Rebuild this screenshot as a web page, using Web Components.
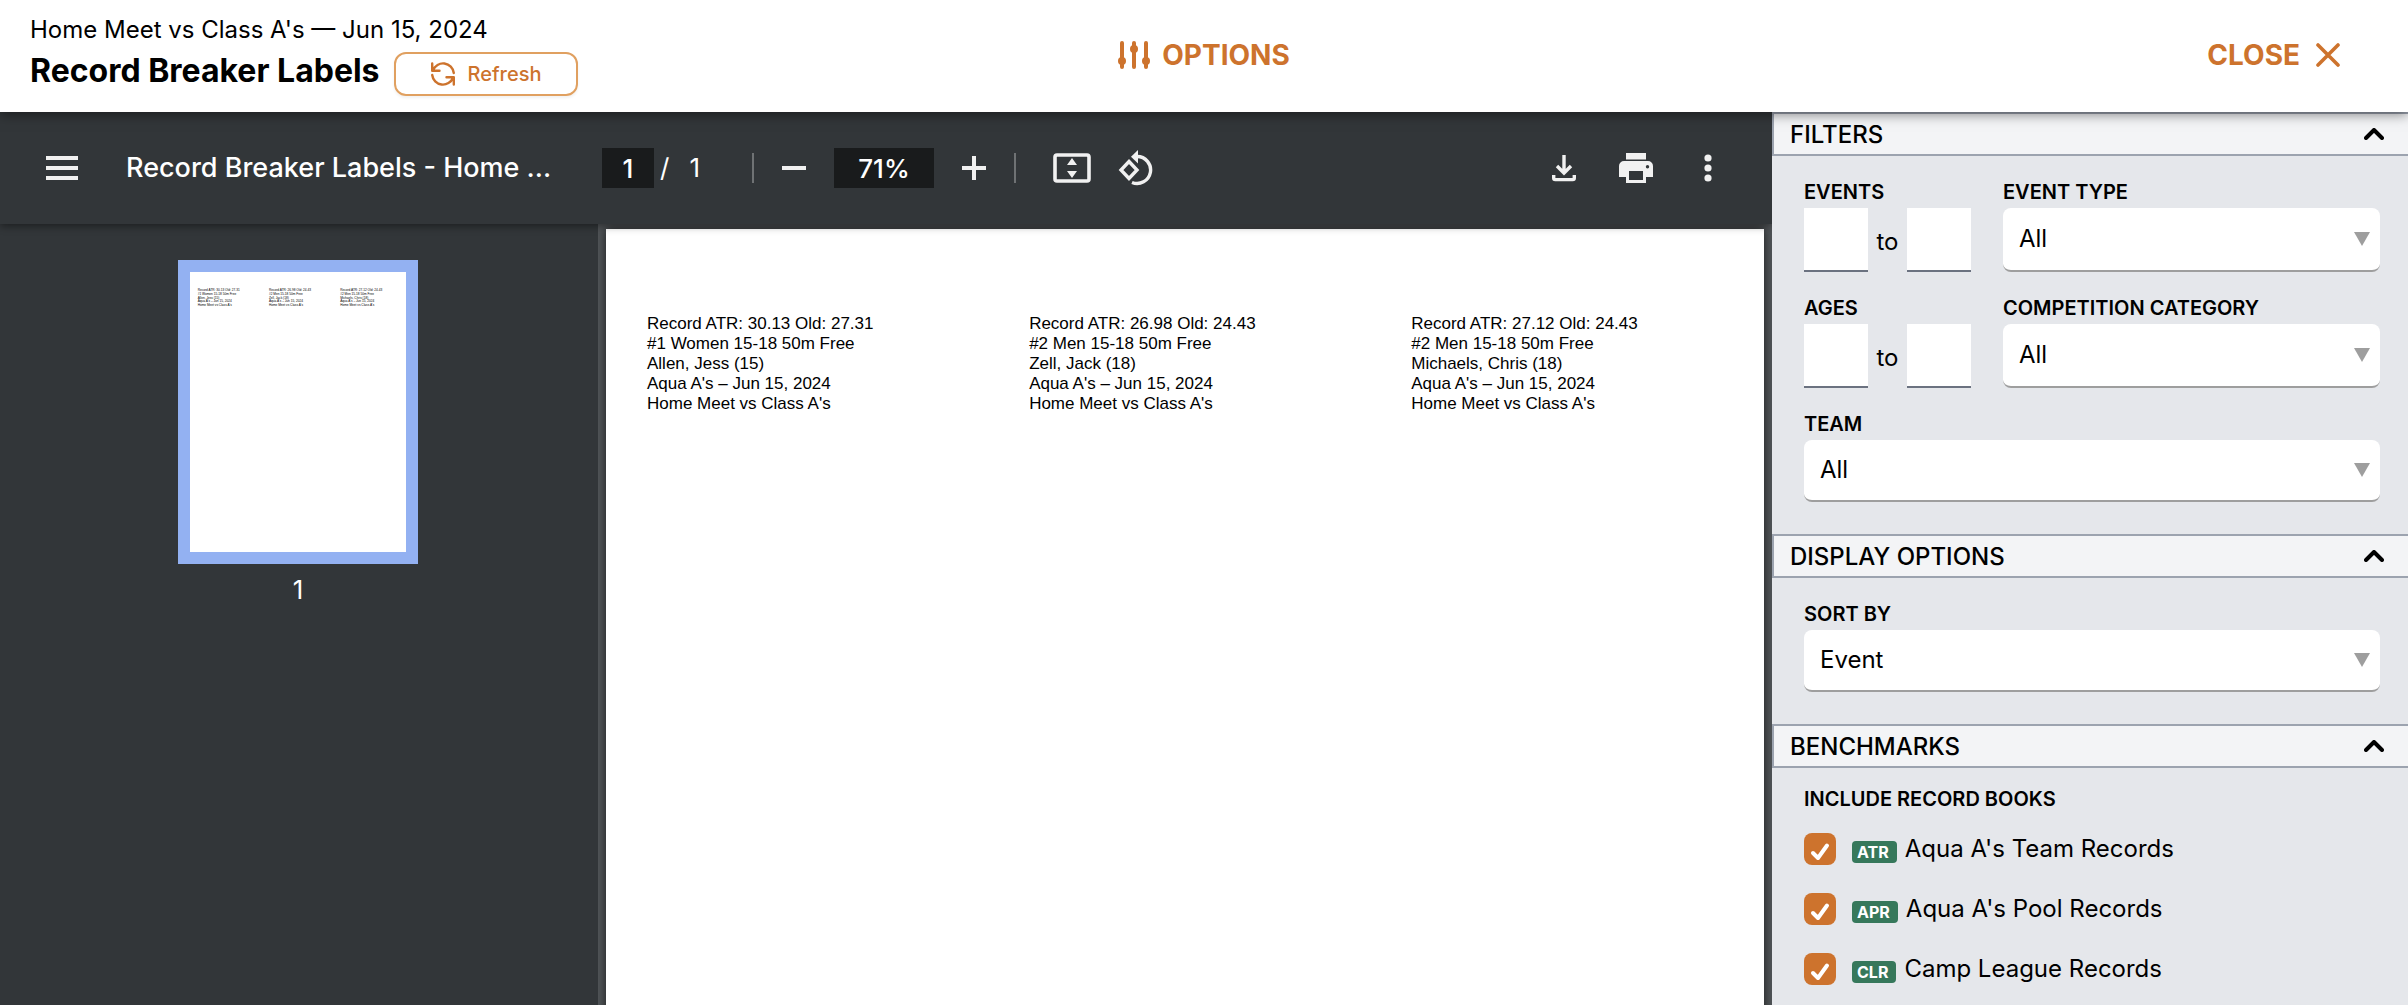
<!DOCTYPE html>
<html lang="en">
<head>
<meta charset="utf-8">
<title>Record Breaker Labels</title>
<style>
  html, body { margin: 0; height: 100%; }
  body { font-family: Inter, "Liberation Sans", sans-serif; color: #000; overflow: hidden; }
</style>
</head>
<body>
<report-app></report-app>
<script>
const LABELS = [
  ["Record ATR: 30.13 Old: 27.31", "#1 Women 15-18 50m Free", "Allen, Jess (15)", "Aqua A's – Jun 15, 2024", "Home Meet vs Class A's"],
  ["Record ATR: 26.98 Old: 24.43", "#2 Men 15-18 50m Free", "Zell, Jack (18)", "Aqua A's – Jun 15, 2024", "Home Meet vs Class A's"],
  ["Record ATR: 27.12 Old: 24.43", "#2 Men 15-18 50m Free", "Michaels, Chris (18)", "Aqua A's – Jun 15, 2024", "Home Meet vs Class A's"]
];

const RESET = `*, *::before, *::after { box-sizing: border-box; }
  button, input, select { font: inherit; color: inherit; margin: 0; }
  button { background: none; border: 0; padding: 0; cursor: pointer; }
  svg { display: block; flex: none; }`;

class BaseElement extends HTMLElement {
  connectedCallback() {
    if (this.shadowRoot) return;
    this.attachShadow({ mode: "open" }).innerHTML = `<style>${RESET}${this.styles()}</style>${this.markup()}`;
  }
}

/* Title bar */
customElements.define("report-header", class extends BaseElement {
  styles() { return `
    :host { display: grid; grid-template-columns: 1fr auto 1fr; align-items: center; height: 112px;
      padding: 0 30px; background: #fff; position: relative; z-index: 3;
      box-shadow: 0 2px 12px rgba(0,0,0,.5); }
    .meet { font-size: 24px; line-height: 32px; }
    .row { display: flex; gap: 14px; margin-top: 6px; }
    h1 { margin: 0; font-size: 32px; line-height: 38px; font-weight: 700; white-space: nowrap; }
    .refresh { display: flex; align-items: center; justify-content: center; gap: 12px; width: 184px; height: 44px;
      border: 2px solid #e0a060; border-radius: 12px; color: #cd732d; font-size: 20px; font-weight: 500;
      box-shadow: 0 2px 3px rgba(0,0,0,.06); }
    .action { display: flex; align-items: center; gap: 12px; color: #cd732d; font-size: 28px; line-height: 32px; font-weight: 700; padding-bottom: 2px; }
    .close { justify-self: end; gap: 16px; margin-right: 38px; }
    .left { padding-bottom: 2px; }`; }
  markup() { return `
    <div class="left">
      <div class="meet">Home Meet vs Class A's — Jun 15, 2024</div>
      <div class="row">
        <h1>Record Breaker Labels</h1>
        <button class="refresh">
          <svg width="26" height="26" viewBox="0 0 26 26" fill="none" stroke="currentColor" stroke-width="2.4" stroke-linecap="round" stroke-linejoin="round"><path d="M2.2 2.5v7.300h7.300M3 9.300A10.800 10.800 0 0 1 23.800 12M23.800 23.500v-7.300h-7.300M23 16.700A10.800 10.800 0 0 1 2.200 14"/></svg>
          Refresh
        </button>
      </div>
    </div>
    <button class="action">
      <svg width="32" height="28" viewBox="0 0 32 28" fill="currentColor" stroke="currentColor" stroke-width="4" stroke-linecap="round"><path d="M4 2v24M16 2v24M28 2v24"/><g stroke="none"><circle cx="4" cy="20" r="4"/><circle cx="16" cy="8" r="4"/><circle cx="28" cy="20" r="4"/></g></svg>
      OPTIONS
    </button>
    <button class="action close">
      CLOSE
      <svg width="24" height="24" viewBox="0 0 24 24" fill="none" stroke="currentColor" stroke-width="3.600" stroke-linecap="round"><path d="M2 2l20 20M22 2L2 22"/></svg>
    </button>`; }
});

/* Viewer toolbar */
customElements.define("pdf-toolbar", class extends BaseElement {
  styles() { return `
    :host { display: flex; align-items: center; height: 112px; flex: none; padding: 0 28px 0 46px; background: #323639;
      color: #fff; font-size: 26px; line-height: 32px; font-weight: 500; position: relative; z-index: 2;
      box-shadow: 0 2px 8px rgba(0,0,0,.45); }
    button { display: flex; align-items: center; justify-content: center; height: 56px; color: #f1f1f1; }
    .menu { width: 32px; }
    .title { width: 476px; margin-left: 48px; white-space: nowrap; font-size: 27px; }
    input { height: 40px; border: 0; padding: 0; background: #191b1c; text-align: center; font-weight: 500; border-radius: 0; }
    .page { width: 52px; }
    .of { display: flex; gap: 20px; width: 98px; padding-left: 6px; font-weight: 400; }
    .sep { width: 2px; height: 30px; background: #6f7274; }
    .zoom { display: flex; align-items: center; }
    .zoom input { width: 100px; }
    .zoom button { width: 80px; }
    .fit { display: flex; padding-left: 24px; }
    .fit button { width: 64px; }
    .end { display: flex; margin-left: auto; }
    .end button { width: 72px; }`; }
  markup() { return `
    <button class="menu" aria-label="Menu"><svg width="32" height="24" viewBox="0 0 32 24" fill="currentColor"><path d="M0 0h32v4H0zM0 10h32v4H0zM0 20h32v4H0z"/></svg></button>
    <div class="title">Record Breaker Labels - Home ...</div>
    <input class="page" aria-label="Page number" value="1">
    <div class="of"><span>/</span><span>1</span></div>
    <span class="sep"></span>
    <div class="zoom">
      <button aria-label="Zoom out"><svg width="24" height="24" fill="currentColor"><path d="M0 10h24v4H0z"/></svg></button>
      <input aria-label="Zoom level" value="71%">
      <button aria-label="Zoom in"><svg width="24" height="24" fill="currentColor"><path d="M0 10h10V0h4v10h10v4H14v10h-4V14H0z"/></svg></button>
    </div>
    <span class="sep"></span>
    <div class="fit">
      <button aria-label="Fit to page"><svg width="38" height="30" viewBox="0 0 38 30"><rect x="2" y="2" width="34" height="26" rx="2" fill="none" stroke="currentColor" stroke-width="3.600"/><path d="M14 12l5-7 5 7zM14 18h10l-5 7z" fill="currentColor"/></svg></button>
      <button aria-label="Rotate"><svg width="36" height="36" viewBox="0 0 36 36" fill="none" stroke="currentColor" stroke-width="3.400"><path d="M11 11.500L19 20l-8 8.500L3 20z"/><path d="M19 6.500a13.500 13.500 0 1 1-5 26"/><path d="M20 0v13.500L13 6.700z" fill="currentColor" stroke="none"/></svg></button>
    </div>
    <div class="end">
      <button aria-label="Download"><svg width="24" height="28" viewBox="0 0 24 28" fill="none" stroke="currentColor" stroke-width="3.400"><path d="M12 1v18M5 12l7 7 7-7M1.700 21v3q0 1.600 1.600 1.600h17.400q1.600 0 1.600-1.600v-3"/></svg></button>
      <button aria-label="Print"><svg width="34" height="30" viewBox="0 0 34 30" fill="currentColor" fill-rule="evenodd"><path d="M7 0h20v6.500H7zM5 8h24a5 5 0 0 1 5 5v11h-7v6H7v-6H0V13a5 5 0 0 1 5-5zM10 18v9h14v-9zM28.500 12a1.700 1.700 0 1 0 .01 3.400A1.700 1.700 0 0 0 28.500 12z"/></svg></button>
      <button aria-label="More actions"><svg width="8" height="28" fill="currentColor"><circle cx="4" cy="4" r="3.600"/><circle cx="4" cy="14" r="3.600"/><circle cx="4" cy="24" r="3.600"/></svg></button>
    </div>`; }
});

/* Thumbnail strip */
customElements.define("pdf-thumbnails", class extends BaseElement {
  styles() { return `
    :host { display: flex; flex-direction: column; align-items: center; width: 598px; flex: none; padding: 36px 2px 0 0; background: #323639; color: #fff; }
    .thumb { border: 12px solid #93b1f2; background: #fff; }
    span { font-size: 26px; line-height: 32px; margin-top: 10px; }`; }
  markup() {
    const cols = LABELS.map((lines, i) => lines.map((t, j) =>
      `<text x="${41 + i * 382}" y="${102 + j * 20}">${t}</text>`).join("")).join("");
    return `<button class="thumb" aria-label="Page 1"><svg width="216" height="280" viewBox="0 0 1158 1500" font-family="Liberation Sans, Arial, sans-serif" font-size="17">${cols}</svg></button><span>1</span>`;
  }
});

/* Page canvas */
customElements.define("pdf-page", class extends BaseElement {
  styles() { return `
    :host { display: block; flex: 1; min-width: 0; padding: 5px 8px 0; background: #525659; overflow: hidden; }
    .sheet { display: grid; grid-template-columns: repeat(3, 33%); align-content: start; padding-top: 85px; aspect-ratio: 17 / 22;
      background: #fff; box-shadow: 0 0 10px rgba(0,0,0,.7); font-family: "Liberation Sans", Arial, sans-serif; }
    p { margin: 0; padding-left: 41px; font-size: 17px; line-height: 20px; white-space: nowrap; }`; }
  markup() {
    return `<div class="sheet">${LABELS.map(l => `<div>${l.map(t => `<p>${t}</p>`).join("")}</div>`).join("")}</div>`;
  }
});

customElements.define("pdf-viewer", class extends BaseElement {
  styles() { return `
    :host { display: flex; flex-direction: column; flex: 1; min-width: 0; overflow: hidden; }
    .body { display: flex; flex: 1; min-height: 0; }`; }
  markup() { return `<pdf-toolbar></pdf-toolbar><div class="body"><pdf-thumbnails></pdf-thumbnails><pdf-page></pdf-page></div>`; }
});

/* Options panel parts */
const LABEL_CSS = `.label { display: block; font-size: 20px; line-height: 24px; font-weight: 600; margin-bottom: 4px; white-space: nowrap; }`;

customElements.define("panel-section", class extends BaseElement {
  styles() { return `
    :host { display: block; }
    .head { display: flex; justify-content: space-between; align-items: center; width: 100%; height: 44px; padding: 0 24px 0 16px;
      background: #f3f4f6; border: solid #9ca3af; border-width: 2px 0 2px 2px; font-size: 24px; font-weight: 500; }
    .body { display: flex; flex-direction: column; gap: 24px; padding: 24px 28px 32px 32px; }
    :host([dense]) .body { padding-top: 19px; }`; }
  markup() { return `
    <button class="head" aria-expanded="true">${this.getAttribute("heading")}
      <svg width="20" height="12" viewBox="0 0 20 12" fill="none" stroke="currentColor" stroke-width="4" stroke-linecap="round" stroke-linejoin="round"><path d="M2 10l8-8 8 8"/></svg>
    </button>
    <div class="body"><slot></slot></div>`; }
});

customElements.define("select-field", class extends BaseElement {
  styles() { return `${LABEL_CSS}
    :host { display: flex; flex-direction: column; min-width: 0; }
    .box { display: grid; flex: 1; align-items: center; }
    select, svg { grid-area: 1 / 1; }
    select { appearance: none; width: 100%; height: 100%; min-height: 62px; padding: 0 40px 2px 16px; border: 0; border-bottom: 2px solid #9e9e9e;
      border-radius: 8px; background: #fff; font-size: 24px; }
    svg { justify-self: end; margin: 0 10px 2px 0; pointer-events: none; }`; }
  markup() { return `
    <label class="label" for="s">${this.getAttribute("label")}</label>
    <div class="box"><select id="s"><option>${this.getAttribute("value")}</option></select>
    <svg width="16" height="14" viewBox="0 0 16 14" fill="#9e9e9e"><path d="M0 0h16L8 14z"/></svg></div>`; }
});

customElements.define("range-field", class extends BaseElement {
  styles() { return `${LABEL_CSS}
    :host { display: block; }
    .row { display: flex; align-items: center; font-size: 24px; line-height: 32px; }
    .row span { width: 39px; text-align: center; padding-top: 4px; }
    input { width: 64px; height: 64px; border: 0; border-bottom: 2px solid #6b7280; border-radius: 0; background: #fff; padding: 0 8px; }`; }
  markup() {
    const label = this.getAttribute("label");
    return `<label class="label" for="from">${label}</label>
    <div class="row"><input id="from"><span>to</span><input aria-label="${label} to"></div>`; }
});

customElements.define("field-row", class extends BaseElement {
  styles() { return `:host { display: grid; grid-template-columns: auto 1fr; gap: 32px; }`; }
  markup() { return `<slot></slot>`; }
});

customElements.define("record-books", class extends BaseElement {
  styles() { return `
    :host { display: block; }
    .title { font-size: 20px; line-height: 24px; font-weight: 600; margin-bottom: 22px; }
    .list { display: flex; flex-direction: column; gap: 28px; }`; }
  markup() { return `<div role="group" aria-labelledby="t"><div class="title" id="t">INCLUDE RECORD BOOKS</div><div class="list"><slot></slot></div></div>`; }
});

customElements.define("record-book", class extends BaseElement {
  styles() { return `
    :host { display: block; }
    label { display: flex; align-items: center; height: 32px; font-size: 24px; line-height: 32px; }
    .tick { display: grid; margin-right: 16px; }
    input, svg { grid-area: 1 / 1; }
    input { appearance: none; width: 32px; height: 32px; border-radius: 8px; background: #fff; }
    input:checked { background: #cd732d; }
    svg { pointer-events: none; }
    .badge { padding: 0 8px 0 5px; margin: 6px 8px 0 0; border-radius: 4px; background: #36785b; color: #fff; font-size: 16px; line-height: 22px; font-weight: 700; }`; }
  markup() { return `
    <label><span class="tick"><input type="checkbox" checked>
      <svg width="32" height="32" viewBox="0 0 32 32" fill="none" stroke="#fff" stroke-width="4" stroke-linecap="round" stroke-linejoin="round"><path d="M9 20l5 5L23 12.500"/></svg></span>
      <span class="badge">${this.getAttribute("code")}</span><slot></slot></label>`; }
});

customElements.define("options-panel", class extends BaseElement {
  styles() { return `:host { display: block; width: 636px; flex: none; background: #e5e7eb; overflow: hidden; }`; }
  markup() { return `
    <panel-section heading="FILTERS">
      <field-row><range-field label="EVENTS"></range-field><select-field label="EVENT TYPE" value="All"></select-field></field-row>
      <field-row><range-field label="AGES"></range-field><select-field label="COMPETITION CATEGORY" value="All"></select-field></field-row>
      <select-field label="TEAM" value="All"></select-field>
    </panel-section>
    <panel-section heading="DISPLAY OPTIONS">
      <select-field label="SORT BY" value="Event"></select-field>
    </panel-section>
    <panel-section heading="BENCHMARKS" dense>
      <record-books>
        <record-book code="ATR">Aqua A's Team Records</record-book>
        <record-book code="APR">Aqua A's Pool Records</record-book>
        <record-book code="CLR">Camp League Records</record-book>
      </record-books>
    </panel-section>`; }
});

customElements.define("report-app", class extends BaseElement {
  styles() { return `
    :host { display: flex; flex-direction: column; height: 100vh; }
    main { display: flex; flex: 1; min-height: 0; }`; }
  markup() { return `<report-header></report-header><main><pdf-viewer></pdf-viewer><options-panel></options-panel></main>`; }
});
</script>
</body>
</html>
